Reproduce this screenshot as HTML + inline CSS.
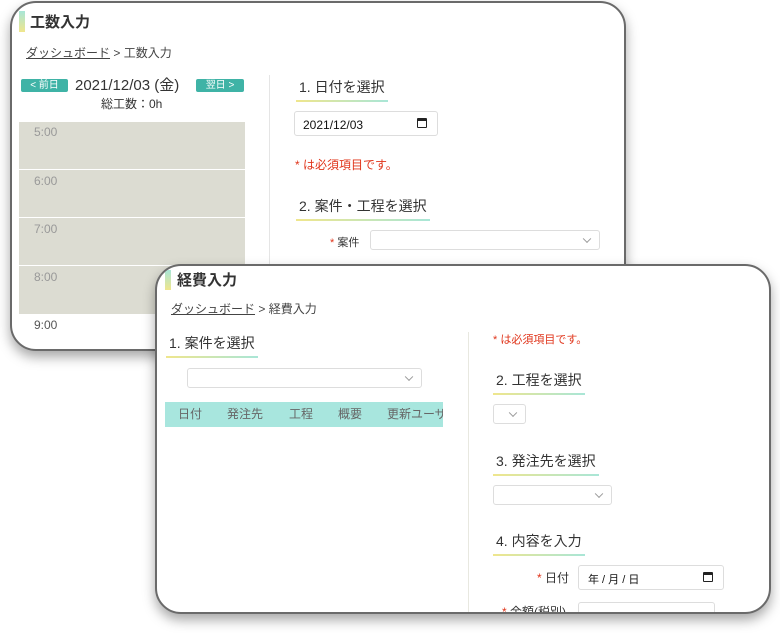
<!DOCTYPE html>
<html><head><meta charset="utf-8"><style>
*{box-sizing:border-box;margin:0;padding:0}
body{width:780px;height:633px;background:#fff;position:relative;overflow:hidden;font-family:"Liberation Sans","Noto Sans CJK JP",sans-serif;color:#333}
.card{position:absolute;background:#fff;border:2px solid #6a6a6a;border-radius:26px;box-shadow:0 6px 12px rgba(0,0,0,.35);overflow:hidden}
.a{position:absolute;white-space:nowrap}
.bar{position:absolute;width:6px;background:linear-gradient(#a8e6d8,#f0e68c)}
.ttl{font-size:15px;font-weight:bold;color:#333}
.bc{font-size:12px;color:#444}
.bc u{text-decoration:underline}
.h{font-size:14px;color:#333;padding:0 3px 3px 3px;border-bottom:2px solid;border-image:linear-gradient(90deg,#f0e68c,#a8e6d8) 1}
.btn{background:#3fb3a6;color:#fff;font-size:10px;border-radius:2px;height:13px;line-height:13px;text-align:center}
.sel{position:absolute;border:1px solid #ddd;border-radius:3px;background:#fff}
.sel::after{content:"";position:absolute;right:9px;top:50%;width:5px;height:5px;border-right:1px solid #999;border-bottom:1px solid #999;transform:translateY(-70%) rotate(45deg)}
.inp{position:absolute;border:1px solid #ddd;border-radius:3px;background:#fff;font-size:12px;color:#111}
.req{color:#e0341a}
.cal{position:absolute;width:10px;height:10px;border:1.5px solid #222;border-top-width:3px;border-radius:1px}
</style></head><body>

<div class="card" style="left:10px;top:1px;width:616px;height:350px">
  <div class="bar" style="left:7px;top:8px;height:21px"></div>
  <div class="a ttl" style="left:18px;top:8px">工数入力</div>
  <div class="a bc" style="left:14px;top:41px"><u>ダッシュボード</u> &gt; 工数入力</div>
  <div class="a btn" style="left:9px;top:76px;width:47px">&lt; 前日</div>
  <div class="a" style="left:63px;top:71px;font-size:15px">2021/12/03 (金)</div>
  <div class="a btn" style="left:184px;top:76px;width:48px">翌日 &gt;</div>
  <div class="a" style="left:89px;top:92px;font-size:12px">総工数：0h</div>
  <div class="a" style="left:7px;top:119px;width:226px;height:192px;background:#dcdcd2"></div>
  <div class="a" style="left:7px;top:166px;width:226px;height:1px;background:#fff"></div>
  <div class="a" style="left:7px;top:214px;width:226px;height:1px;background:#fff"></div>
  <div class="a" style="left:7px;top:262px;width:226px;height:1px;background:#fff"></div>
  <div class="a" style="left:22px;top:122px;font-size:12px;color:#999">5:00</div>
  <div class="a" style="left:22px;top:171px;font-size:12px;color:#999">6:00</div>
  <div class="a" style="left:22px;top:219px;font-size:12px;color:#999">7:00</div>
  <div class="a" style="left:22px;top:267px;font-size:12px;color:#999">8:00</div>
  <div class="a" style="left:22px;top:315px;font-size:12px;color:#555">9:00</div>
  <div class="a" style="left:257px;top:72px;width:1px;height:280px;background:#e5e5e5"></div>
  <div class="a h" style="left:284px;top:74px">1. 日付を選択</div>
  <div class="inp" style="left:282px;top:108px;width:144px;height:25px;padding:6px 8px">2021/12/03<span class="cal" style="right:10px;top:6px"></span></div>
  <div class="a req" style="left:283px;top:153px;font-size:12px">* は必須項目です。</div>
  <div class="a h" style="left:284px;top:193px">2. 案件・工程を選択</div>
  <div class="a" style="left:318px;top:231px;font-size:11px"><span class="req">*</span> 案件</div>
  <div class="sel" style="left:358px;top:227px;width:230px;height:20px"></div>
</div>

<div class="card" style="left:155px;top:264px;width:616px;height:350px">
  <div class="bar" style="left:8px;top:4px;height:20px"></div>
  <div class="a ttl" style="left:20px;top:3px">経費入力</div>
  <div class="a bc" style="left:14px;top:34px"><u>ダッシュボード</u> &gt; 経費入力</div>
  <div class="a h" style="left:9px;top:67px">1. 案件を選択</div>
  <div class="sel" style="left:30px;top:102px;width:235px;height:20px"></div>
  <div class="a" style="left:8px;top:136px;width:278px;height:25px;background:#a8e6de;font-size:12px;color:#666;line-height:25px;overflow:hidden">
    <span style="position:absolute;left:13px">日付</span><span style="position:absolute;left:62px">発注先</span><span style="position:absolute;left:124px">工程</span><span style="position:absolute;left:173px">概要</span><span style="position:absolute;left:222px">更新ユーザ</span></div>
  <div class="a" style="left:311px;top:66px;width:1px;height:290px;background:#e8e8e0"></div>
  <div class="a req" style="left:336px;top:65px;font-size:11px">* は必須項目です。</div>
  <div class="a h" style="left:336px;top:104px">2. 工程を選択</div>
  <div class="sel" style="left:336px;top:138px;width:33px;height:20px"></div>
  <div class="a h" style="left:336px;top:185px">3. 発注先を選択</div>
  <div class="sel" style="left:336px;top:219px;width:119px;height:20px"></div>
  <div class="a h" style="left:336px;top:265px">4. 内容を入力</div>
  <div class="a" style="left:380px;top:303px;font-size:12px"><span class="req">*</span> 日付</div>
  <div class="inp" style="left:421px;top:299px;width:146px;height:25px;padding:5px 9px;font-size:11px">年 / 月 / 日<span class="cal" style="right:10px;top:6px"></span></div>
  <div class="a" style="left:345px;top:337px;font-size:12px"><span class="req">*</span> 金額(税別)</div>
  <div class="inp" style="left:421px;top:336px;width:137px;height:25px"></div>
</div>
</body></html>
